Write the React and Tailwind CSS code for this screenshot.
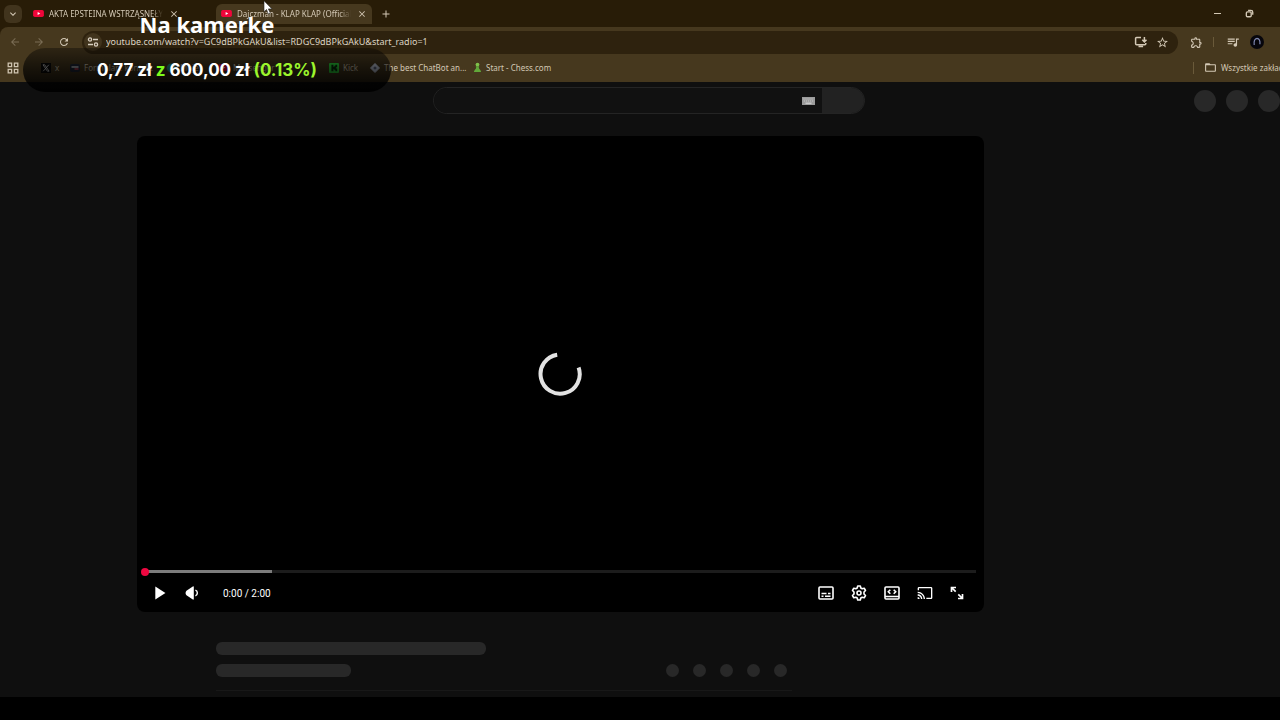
import React from "react";
import {
  MdArrowBack,
  MdArrowForward,
  MdRefresh,
  MdStarBorder,
  MdOutlineExtension,
  MdQueueMusic,
  MdFolderOpen,
  MdAdd,
  MdClose,
  MdExpandMore,
  MdCast,
  MdPlayArrow,
} from "react-icons/md";

// ─── ICONS ─────────────────────────────
const YoutubeIcon = () => (
  <svg viewBox="0 0 12 10" className="h-[9px] w-[11px] shrink-0">
    <rect y="1" width="12" height="8" rx="2" fill="#f0063a" />
    <path d="M5 3.2v3.6L8 5z" fill="#fff" />
  </svg>
);

const SiteInfoIcon = () => (
  <svg viewBox="0 0 12 12" className="size-3" fill="none" stroke="#d8cfc0" strokeWidth="1.3">
    <circle cx="3" cy="3.5" r="1.6" />
    <path d="M6 3.5h5M1 8.5h5" />
    <circle cx="9" cy="8.5" r="1.6" />
  </svg>
);

const AppsIcon = () => (
  <svg viewBox="0 0 12 12" className="size-3" fill="none" stroke="#cfc4b0" strokeWidth="1.3">
    <path d="M1.2 1.2h3.4v3.4H1.2zM7.4 1.2h3.4v3.4H7.4zM1.2 7.4h3.4v3.4H1.2zM7.4 7.4h3.4v3.4H7.4z" />
  </svg>
);

const InstallIcon = () => (
  <svg viewBox="0 0 14 12" className="h-3 w-[14px]" fill="none" stroke="currentColor" strokeWidth="1.5">
    <path d="M7 1.6H2.6a1 1 0 0 0-1 1v5.2a1 1 0 0 0 1 1h8.2a1 1 0 0 0 1-1V7M4.5 10.6h4.6M10.4 1v4.6M8.3 3.8l2.1 2.1 2.1-2.1" />
  </svg>
);

const RestoreIcon = () => (
  <svg viewBox="0 0 10 10" className="size-[9px]" fill="none" stroke="currentColor" strokeWidth="1.5">
    <rect x="1.5" y="3.2" width="5.4" height="5.4" rx="1.2" />
    <path d="M3.4 1.5h3.2a2 2 0 0 1 2 2v3" />
  </svg>
);

const XLogo = () => (
  <svg viewBox="0 0 10 10" className="size-[10px]">
    <rect width="10" height="10" fill="#0a0a0a" />
    <path d="M2 1.8h1.7l4.4 6.4H6.4zM7.8 1.8 2.2 8.2" fill="none" stroke="#e8e8e8" strokeWidth="0.8" />
  </svg>
);

const FlagLogo = () => (
  <svg viewBox="0 0 10 10" className="size-[10px]">
    <rect y="1" width="10" height="8" rx="2" fill="#20283a" />
    <path d="M1.5 4h7" stroke="#d8d8e0" strokeWidth="1.4" />
    <path d="M4.5 6h4" stroke="#e0405a" strokeWidth="1.4" />
  </svg>
);

const TealLogo = () => (
  <svg viewBox="0 0 10 10" className="size-[10px]">
    <circle cx="5" cy="5" r="4.4" fill="#28a08c" />
  </svg>
);

const KickLogo = () => (
  <svg viewBox="0 0 10 10" className="size-[10px]">
    <rect width="10" height="10" rx="1" fill="#2ee63e" />
    <path d="M2.4 1.8h2v2h1v-1h1v-1h1.8v2.4h-1v1.4h1v2.6H6.4v-1h-1v-1h-1v2h-2z" fill="#08300c" />
  </svg>
);

const ChatLogo = () => (
  <svg viewBox="0 0 10 10" className="size-[10px]">
    <path d="M5 .5 9.5 5 5 9.5.5 5z" fill="#cdd6ea" stroke="#cdd6ea" strokeLinejoin="round" />
    <path d="M5 3.2 6.8 5 5 6.8 3.2 5z" fill="#5c6680" />
  </svg>
);

const PawnLogo = () => (
  <svg viewBox="0 0 10 12" className="h-[11px] w-[9px]">
    <circle cx="5" cy="2.8" r="2.1" fill="#7fc24a" />
    <path d="M3 4.600h4L6.400 6C6.600 8 8.800 8.600 9 11H1c.2-2.400 2.400-3 2.600-5z" fill="#62a83a" />
  </svg>
);

const VolumeIcon = () => (
  <svg viewBox="0 0 14 14" className="size-[14px]">
    <path d="M.6 7c0-1.300.5-2.100 1.600-2.800L7.800.5c.6-.3 1-.1 1 .5v12c0 .6-.4.800-1 .5L2.200 9.800C1.100 9.100.6 8.300.6 7z" fill="#fff" />
    <path d="M10.400 4.200c2.600 1 2.600 4.600 0 5.600" fill="none" stroke="#fff" strokeWidth="1.400" />
  </svg>
);

const SubtitlesIcon = () => (
  <svg viewBox="0 0 16 14" className="h-[14px] w-4" fill="none" stroke="#fff" strokeWidth="1.6">
    <rect x="1" y="1" width="14" height="12" rx="1" />
    <path d="M3.500 7.500h5M10 7.500h2.500M3.500 10.200h2M7 10.200h5.500" />
  </svg>
);

const SettingsIcon = () => (
  <svg viewBox="0 0 16 16" className="size-4" fill="none" stroke="#fff" strokeWidth="1.6" strokeLinejoin="round">
    <path d="M6.700 1h2.600l.5 2 1.400.8 2-.6 1.300 2.300L13 7v2l1.500 1.500-1.300 2.300-2-.6-1.400.8-.5 2H6.700l-.5-2-1.400-.8-2 .6-1.300-2.300L3 9V7L1.500 5.500l1.300-2.300 2 .6L6.200 3z" />
    <circle cx="8" cy="8" r="2" />
  </svg>
);

const TheaterIcon = () => (
  <svg viewBox="0 0 16 14" className="h-[14px] w-4" fill="none" stroke="#fff" strokeWidth="1.6">
    <rect x="1" y="1" width="14" height="12" rx="1" />
    <path d="M1 10.500h14M6.300 3.800 4.300 5.800l2 2M9.700 3.800l2 2-2 2" />
  </svg>
);

const FullscreenIcon = () => (
  <svg viewBox="0 0 14 14" className="size-[14px]" fill="none" stroke="#fff" strokeWidth="1.700">
    <path d="M1.500 6V1.500H6M1.500 1.500l4.200 4.200M12.500 8v4.500H8M12.500 12.500 8.300 8.300" />
  </svg>
);

const Spinner = () => (
  <svg viewBox="0 0 46 46" className="size-[46px]">
    <path d="M20.200 3.700A19.600 19.600 0 1 0 41.600 16.500" fill="none" stroke="#e2e2e2" strokeWidth="4" />
  </svg>
);

const KeyboardIcon = () => (
  <svg viewBox="0 0 13 8" className="h-2 w-[13px]">
    <rect width="13" height="8" fill="#9b9b9b" />
    <path d="M1.500 2h10M2 4h9" stroke="#c4c4c4" strokeDasharray="1 1" />
    <path d="M3.500 6.200h6" stroke="#ddd" />
  </svg>
);

const AvatarIcon = () => (
  <svg viewBox="0 0 14 14" className="size-[14px]">
    <circle cx="7" cy="7" r="7" fill="#07060c" />
    <path d="M4.200 10C3.600 6 4.800 3.600 7 3.400c2.200.2 3.300 2.400 2.900 5.800" fill="none" stroke="#8088b0" strokeWidth="1.200" />
  </svg>
);

const CursorIcon = () => (
  <svg viewBox="0 0 10 15" className="h-[15px] w-[10px]">
    <path d="M1 .8v11l2.500-2.300L5.300 14l2-.9-1.900-4.200H9z" fill="#fff" stroke="#222" strokeWidth="0.6" />
  </svg>
);

// ─── BROWSER ─────────────────────────────
const TABS = [
  { title: "AKTA EPSTEINA WSTRZĄSNĘŁY", active: false },
  { title: "Dajczman - KLAP KLAP (Official", active: true },
];

const BOOKMARKS = [
  { label: "x", icon: <XLogo />, width: "w-[29px]" },
  { label: "Formularz kontakt", icon: <FlagLogo />, width: "w-[96px]" },
  { label: "Moje", icon: <TealLogo />, width: "w-[52px]" },
  { label: "Messenger", icon: <YoutubeIcon />, width: "w-[111px]" },
  { label: "Kick", icon: <KickLogo />, width: "w-[41px]" },
  { label: "The best ChatBot an...", icon: <ChatLogo />, width: "w-[103px]" },
  { label: "Start - Chess.com", icon: <PawnLogo />, width: "w-[90px]" },
];

function Tab({ title, active }) {
  return (
    <div
      className={`flex h-5 w-[156px] items-center rounded-t-md pr-[5px] pl-[5px] ${
        active ? "bg-[#46381e]" : ""
      }`}
    >
      <YoutubeIcon />
      <span className="ml-[5px] w-[114px] overflow-hidden mask-r-from-90% whitespace-nowrap">
        {title}
      </span>
      <button aria-label="Close tab" className="ml-auto">
        <MdClose className="size-[10px]" />
      </button>
    </div>
  );
}

function Browser() {
  return (
    <header className="bg-[#281c07] font-['Noto_Sans',sans-serif] text-[9px] whitespace-nowrap text-[#d3c8b5]">
      {/* TABS */}
      <div className="flex h-[27px] items-center">
        <button aria-label="Search tabs" className="ml-1 flex size-[18px] items-center justify-center rounded-md bg-[#41341d]">
          <MdExpandMore className="size-3" />
        </button>
        <nav className="ml-[6px] flex gap-8 text-[8px]">
          {TABS.map((tab) => (
            <Tab key={tab.title} {...tab} />
          ))}
        </nav>
        <button aria-label="New tab" className="ml-2">
          <MdAdd className="size-3" />
        </button>
        <div className="ml-auto flex items-center gap-6">
          <button aria-label="Minimize" className="h-px w-[7px] bg-[#d3c8b5]" />
          <button aria-label="Restore">
            <RestoreIcon />
          </button>
          <button aria-label="Close window" className="-mr-[10px]">
            <MdClose className="size-3" />
          </button>
        </div>
      </div>

      {/* ADDRESS BAR */}
      <div className="flex h-[30px] items-center rounded-tl-lg bg-[#46381e]">
        <button aria-label="Back" className="ml-[9px] text-[#7a6d55]">
          <MdArrowBack className="size-3" />
        </button>
        <button aria-label="Forward" className="ml-3 text-[#7a6d55]">
          <MdArrowForward className="size-3" />
        </button>
        <button aria-label="Reload" className="ml-[13px]">
          <MdRefresh className="size-3" />
        </button>
        <div className="ml-3 flex h-[23px] flex-1 items-center rounded-full bg-[#2e220e] pr-[9px]">
          <span className="ml-[2px] flex size-[18px] items-center justify-center rounded-full bg-[#41341d]">
            <SiteInfoIcon />
          </span>
          <input
            aria-label="Address"
            className="ml-1 min-w-0 flex-1 text-[#ddd4c4] outline-none"
            defaultValue="youtube.com/watch?v=GC9dBPkGAkU&list=RDGC9dBPkGAkU&start_radio=1"
          />
          <button aria-label="Install app">
            <InstallIcon />
          </button>
          <button aria-label="Bookmark" className="ml-2">
            <MdStarBorder className="size-[13px]" />
          </button>
        </div>
        <button aria-label="Extensions" className="ml-3">
          <MdOutlineExtension className="size-[13px]" />
        </button>
        <span className="ml-[10px] h-[10px] w-px bg-[#6a5a3a]" />
        <button aria-label="Media" className="ml-3">
          <MdQueueMusic className="size-[14px]" />
        </button>
        <button aria-label="Profile" className="mr-4 ml-[10px]">
          <AvatarIcon />
        </button>
      </div>

      {/* BOOKMARKS */}
      <div className="flex h-[25px] items-center overflow-hidden bg-[#46381e] pb-1 text-[8px]">
        <button aria-label="Apps" className="ml-[7px]">
          <AppsIcon />
        </button>
        <nav className="ml-[22px] flex">
          {BOOKMARKS.map((item) => (
            <a key={item.label} href="#" className={`flex items-center gap-1 ${item.width}`}>
              {item.icon}
              {item.label}
            </a>
          ))}
        </nav>
        <span className="ml-auto h-3 w-px bg-[#6a5a3a]" />
        <a href="#" className="ml-[10px] flex w-[76px] items-center gap-1">
          <MdFolderOpen className="size-[13px] shrink-0" />
          Wszystkie zakładki
        </a>
      </div>
    </header>
  );
}

// ─── DONATION GOAL ─────────────────────────────
function DonationGoal() {
  return (
    <aside className="absolute top-2 left-[23px] w-[368px] whitespace-nowrap text-white">
      <h2 className="h-10 text-center font-['Noto_Sans',sans-serif] text-[22px] leading-8 font-bold">
        Na kamerke
      </h2>
      <p className="flex h-11 items-center justify-center rounded-[22px] bg-linear-to-b from-black/35 via-black/65 via-45% to-black/95 pb-1 font-[Inter,sans-serif] text-[17px] leading-5 font-bold">
        <span className="pt-[3px]">
          0,77 zł <span className="text-[#7dfb1c]">z</span> 600,00 zł{" "}
          <span className="text-[#9cf52c]">(0.13%)</span>
        </span>
      </p>
    </aside>
  );
}

// ─── PLAYER ─────────────────────────────
function Player() {
  return (
    <section className="flex h-[476px] w-full max-w-[847px] flex-col rounded-lg bg-black px-2">
      <div className="flex flex-1 items-center justify-center pt-[42px] pr-[2px]">
        <Spinner />
      </div>
      <div className="relative flex h-[3px] items-center bg-[#1c1c1c]">
        <div className="h-[3px] w-[127px] bg-[#7c7c7c]" />
        <span className="absolute -left-1 size-2 rounded-full bg-[#ee0740]" />
      </div>
      <div className="flex h-[39px] items-center pt-px pr-3 pl-[3px] text-white">
        <button aria-label="Play">
          <MdPlayArrow className="size-[22px]" />
        </button>
        <button aria-label="Mute" className="ml-[15px]">
          <VolumeIcon />
        </button>
        <span className="ml-6 font-[Roboto,sans-serif] text-[10px]">0:00 / 2:00</span>
        <div className="ml-auto flex items-center gap-[17px]">
          <button aria-label="Subtitles">
            <SubtitlesIcon />
          </button>
          <button aria-label="Settings">
            <SettingsIcon />
          </button>
          <button aria-label="Theater mode">
            <TheaterIcon />
          </button>
          <button aria-label="Cast">
            <MdCast className="size-4" />
          </button>
          <button aria-label="Fullscreen">
            <FullscreenIcon />
          </button>
        </div>
      </div>
    </section>
  );
}

const App = () => {
  return (
    <div className="relative flex min-h-screen flex-col overflow-hidden bg-black">
      <Browser />

      <main className="flex-1 bg-[#0f0f0f]">
        {/* SEARCH BAR */}
        <div className="grid h-[37px] grid-cols-[1fr_432px_1fr] items-center pl-[18px]">
          <form className="col-start-2 flex h-[27px] overflow-hidden rounded-full border border-[#242424]">
            <input aria-label="Search" className="min-w-0 flex-1 bg-[#111] px-3 text-xs text-white outline-none" />
            <span className="flex items-center bg-[#111] pr-[7px]">
              <KeyboardIcon />
            </span>
            <button type="button" aria-label="Search" className="w-[42px] bg-[#222]" />
          </form>
          <div className="flex justify-end gap-[10px]">
            {[1, 2, 3].map((i) => (
              <span key={i} className="size-[22px] rounded-full bg-[#282828]" />
            ))}
          </div>
        </div>

        <div className="pt-[17px] pl-[137px]">
          <Player />

          {/* SKELETON */}
          <div className="mt-[30px] ml-[79px] max-w-[576px] border-b border-[#181818] pb-[13px]">
            <div className="h-[13px] w-[270px] rounded-md bg-[#282828]" />
            <div className="mt-[9px] flex items-center justify-between pr-[5px]">
              <div className="h-[13px] w-[135px] rounded-md bg-[#282828]" />
              <div className="flex gap-[14px]">
                {[1, 2, 3, 4, 5].map((i) => (
                  <span key={i} className="size-[13px] rounded-full bg-[#282828]" />
                ))}
              </div>
            </div>
          </div>
        </div>
      </main>
      <footer className="h-[23px] bg-black" />

      <DonationGoal />
      <div className="pointer-events-none absolute top-0 left-[263px]">
        <CursorIcon />
      </div>
    </div>
  );
};

export default App;
